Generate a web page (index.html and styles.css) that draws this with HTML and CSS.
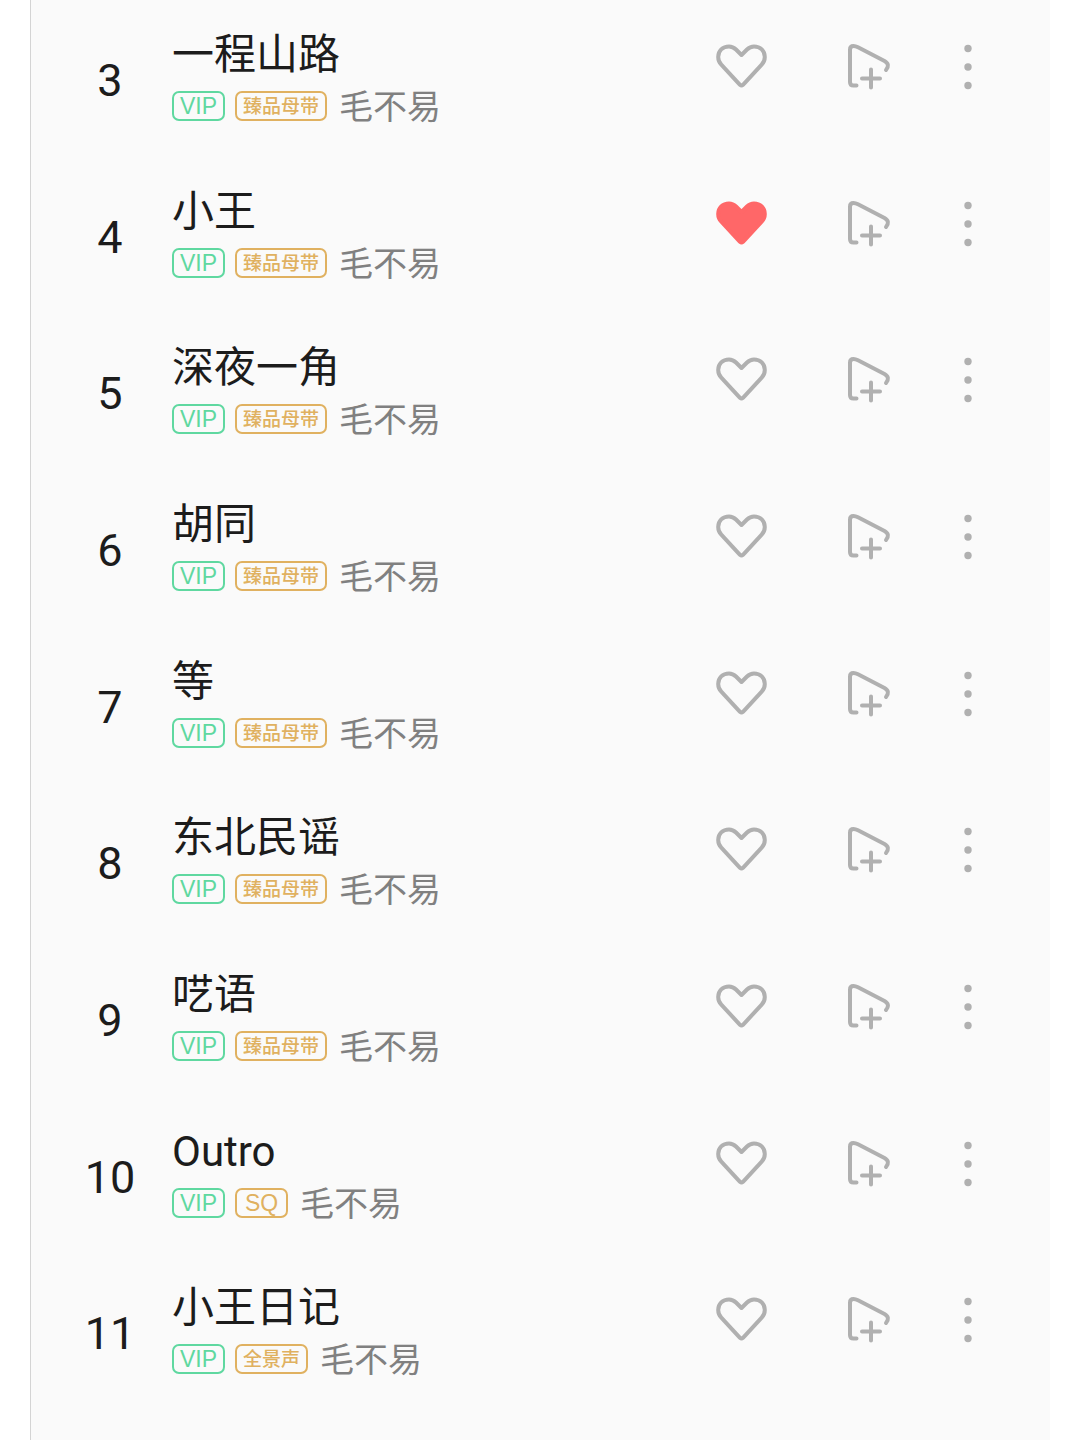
FILE: index.html
```html
<!DOCTYPE html>
<html lang="zh-CN">
<head>
    <meta charset="UTF-8">
    <meta name="viewport" content="width=device-width, initial-scale=1.0">
    <title>毛不易</title>
    <link rel="stylesheet" href="styles.css">
</head>
<body>

<svg class="sprite" aria-hidden="true">
    <symbol id="heart" viewBox="0 0 51 48">
        <path d="M25.5 12L20 6.5C17.8 4.3 15.8 3.4 13 3.4C6.6 3.4 2.2 7.9 2.2 13.9C2.2 17.2 3.3 19.5 5.3 21.6L24 41.8Q25.5 43.2 27 41.8L45.7 21.6C47.7 19.5 48.8 17.2 48.8 13.9C48.8 7.9 44.4 3.4 38 3.4C35.2 3.4 33.2 4.3 31 6.5Z"/>
    </symbol>
    <symbol id="add" viewBox="0 0 44 48">
        <path d="M9.5 42.5H6.5Q3 42.5 3 39V6.5Q3 3 6.5 3Q8.5 3 11 4.3L37.5 18Q43.5 21.5 39 27"/>
        <path d="M15 35.5H33M24 26.5V44.5"/>
    </symbol>
    <symbol id="more" viewBox="0 0 10 48">
        <circle cx="5" cy="5.5" r="3.7"/>
        <circle cx="5" cy="24" r="3.7"/>
        <circle cx="5" cy="42.5" r="3.7"/>
    </symbol>
</svg>

<ol class="songs">
    <li class="song">
        <span class="number">3</span>
        <div class="info">
            <div class="title">一程山路</div>
            <div class="meta"><span class="badge vip">VIP</span><span class="badge quality">臻品母带</span><span class="artist">毛不易</span></div>
        </div>
        <div class="actions">
            <button class="like" aria-label="喜欢"><svg><use href="#heart"/></svg></button>
            <button class="add" aria-label="添加"><svg><use href="#add"/></svg></button>
            <button class="more" aria-label="更多"><svg><use href="#more"/></svg></button>
        </div>
    </li>
    <li class="song">
        <span class="number">4</span>
        <div class="info">
            <div class="title">小王</div>
            <div class="meta"><span class="badge vip">VIP</span><span class="badge quality">臻品母带</span><span class="artist">毛不易</span></div>
        </div>
        <div class="actions">
            <button class="like active" aria-label="取消喜欢"><svg><use href="#heart"/></svg></button>
            <button class="add" aria-label="添加"><svg><use href="#add"/></svg></button>
            <button class="more" aria-label="更多"><svg><use href="#more"/></svg></button>
        </div>
    </li>
    <li class="song">
        <span class="number">5</span>
        <div class="info">
            <div class="title">深夜一角</div>
            <div class="meta"><span class="badge vip">VIP</span><span class="badge quality">臻品母带</span><span class="artist">毛不易</span></div>
        </div>
        <div class="actions">
            <button class="like" aria-label="喜欢"><svg><use href="#heart"/></svg></button>
            <button class="add" aria-label="添加"><svg><use href="#add"/></svg></button>
            <button class="more" aria-label="更多"><svg><use href="#more"/></svg></button>
        </div>
    </li>
    <li class="song">
        <span class="number">6</span>
        <div class="info">
            <div class="title">胡同</div>
            <div class="meta"><span class="badge vip">VIP</span><span class="badge quality">臻品母带</span><span class="artist">毛不易</span></div>
        </div>
        <div class="actions">
            <button class="like" aria-label="喜欢"><svg><use href="#heart"/></svg></button>
            <button class="add" aria-label="添加"><svg><use href="#add"/></svg></button>
            <button class="more" aria-label="更多"><svg><use href="#more"/></svg></button>
        </div>
    </li>
    <li class="song">
        <span class="number">7</span>
        <div class="info">
            <div class="title">等</div>
            <div class="meta"><span class="badge vip">VIP</span><span class="badge quality">臻品母带</span><span class="artist">毛不易</span></div>
        </div>
        <div class="actions">
            <button class="like" aria-label="喜欢"><svg><use href="#heart"/></svg></button>
            <button class="add" aria-label="添加"><svg><use href="#add"/></svg></button>
            <button class="more" aria-label="更多"><svg><use href="#more"/></svg></button>
        </div>
    </li>
    <li class="song">
        <span class="number">8</span>
        <div class="info">
            <div class="title">东北民谣</div>
            <div class="meta"><span class="badge vip">VIP</span><span class="badge quality">臻品母带</span><span class="artist">毛不易</span></div>
        </div>
        <div class="actions">
            <button class="like" aria-label="喜欢"><svg><use href="#heart"/></svg></button>
            <button class="add" aria-label="添加"><svg><use href="#add"/></svg></button>
            <button class="more" aria-label="更多"><svg><use href="#more"/></svg></button>
        </div>
    </li>
    <li class="song">
        <span class="number">9</span>
        <div class="info">
            <div class="title">呓语</div>
            <div class="meta"><span class="badge vip">VIP</span><span class="badge quality">臻品母带</span><span class="artist">毛不易</span></div>
        </div>
        <div class="actions">
            <button class="like" aria-label="喜欢"><svg><use href="#heart"/></svg></button>
            <button class="add" aria-label="添加"><svg><use href="#add"/></svg></button>
            <button class="more" aria-label="更多"><svg><use href="#more"/></svg></button>
        </div>
    </li>
    <li class="song">
        <span class="number">10</span>
        <div class="info">
            <div class="title">Outro</div>
            <div class="meta"><span class="badge vip">VIP</span><span class="badge quality sq">SQ</span><span class="artist">毛不易</span></div>
        </div>
        <div class="actions">
            <button class="like" aria-label="喜欢"><svg><use href="#heart"/></svg></button>
            <button class="add" aria-label="添加"><svg><use href="#add"/></svg></button>
            <button class="more" aria-label="更多"><svg><use href="#more"/></svg></button>
        </div>
    </li>
    <li class="song">
        <span class="number">11</span>
        <div class="info">
            <div class="title">小王日记</div>
            <div class="meta"><span class="badge vip">VIP</span><span class="badge quality">全景声</span><span class="artist">毛不易</span></div>
        </div>
        <div class="actions">
            <button class="like" aria-label="喜欢"><svg><use href="#heart"/></svg></button>
            <button class="add" aria-label="添加"><svg><use href="#add"/></svg></button>
            <button class="more" aria-label="更多"><svg><use href="#more"/></svg></button>
        </div>
    </li>
</ol>

</body>
</html>
```
FILE: styles.css
```css
* {
    box-sizing: border-box;
}
body {
    background-color: #fff;
    color: #1c1c1c;
    font-family: Roboto, "Noto Sans CJK SC", sans-serif;
    margin: 0;
}
.sprite {
    display: none;
}
.songs {
    display: flex;
    flex-direction: column;
    min-height: 100vh;
    margin: 0 30px;
    padding: 28px 77px 2px 49px;
    background-color: #fafafa;
    border-left: 1px solid #d4d4d4;
    list-style: none;
}
.song {
    display: flex;
    flex: 1 0 auto;
    align-items: flex-start;
    padding-bottom: 36px;
}
.number {
    width: 60px;
    margin-right: 32px;
    font-size: 45px;
    line-height: 106px;
    text-align: center;
}
.info {
    flex: 1;
}
.title {
    font-size: 42px;
    line-height: 54px;
}
.meta {
    display: flex;
    align-items: center;
    gap: 10px;
    height: 30px;
    margin-top: 9px;
}
.badge {
    display: flex;
    align-items: center;
    justify-content: center;
    min-width: 53px;
    height: 30px;
    padding: 1px 6px 0;
    border: 2px solid;
    border-radius: 7px;
    font-size: 19px;
    font-weight: 500;
    line-height: 25px;
}
.vip,
.sq {
    font-family: "Liberation Sans", sans-serif;
    font-size: 23px;
    font-weight: 400;
}
.vip {
    color: #5fd8a0;
}
.quality {
    color: #e0b160;
}
.artist {
    margin-left: 2px;
    padding-top: 2px;
    color: #808080;
    font-size: 34px;
    line-height: 30px;
}
.actions {
    display: flex;
    align-items: center;
    height: 78px;
}
.actions button {
    padding: 0;
    background: none;
    border: none;
    color: #b0b0b0;
    cursor: pointer;
}
.actions svg {
    display: block;
    width: 100%;
    height: 48px;
    fill: none;
    stroke: currentColor;
    stroke-width: 4;
    stroke-linecap: round;
    stroke-linejoin: round;
}
.actions .like {
    width: 51px;
}
.actions .like.active {
    color: #ff6768;
}
.actions .like.active svg {
    fill: currentColor;
}
.actions .add {
    width: 44px;
    margin-left: 80px;
}
.actions .more {
    width: 10px;
    margin-left: 72px;
}
.actions .more svg {
    fill: currentColor;
    stroke: none;
}
```
